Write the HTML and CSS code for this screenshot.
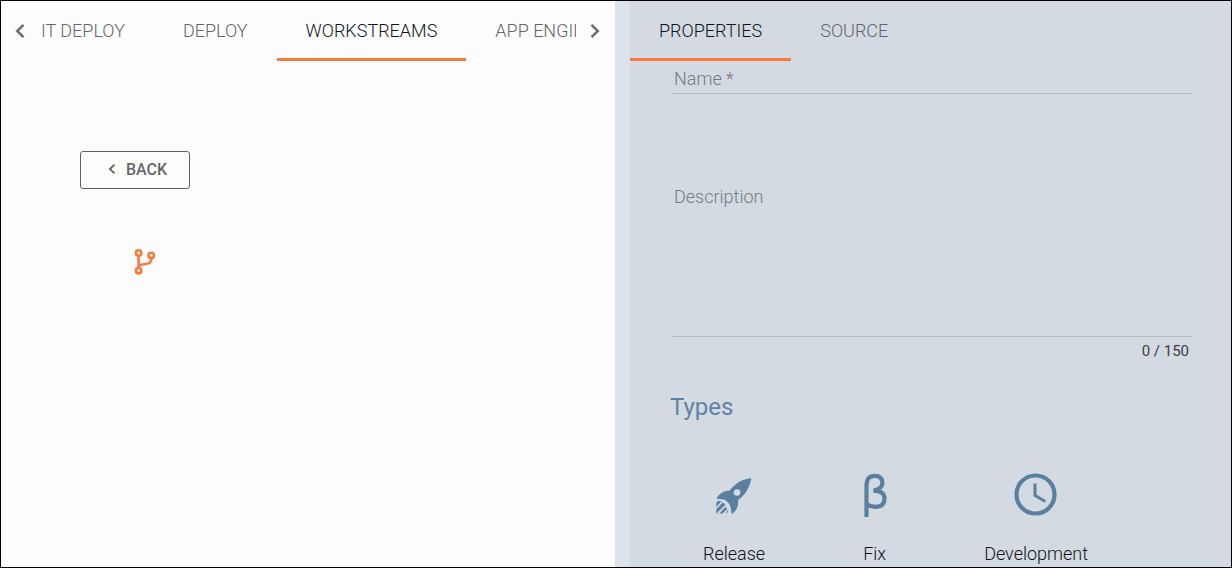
FILE: index.html
```html
<!DOCTYPE html>
<html lang="en">
<head>
<meta charset="utf-8">
<title>Workstreams</title>
<link rel="stylesheet" href="styles.css">
</head>
<body>
<div class="app">
  <main class="canvas">
    <nav class="tabbar" aria-label="Sections">
      <button class="scroll" type="button" aria-label="Scroll left"><svg width="10" height="14" viewBox="0 0 10 14"><path d="M8.500 .8 2.200 7l6.300 6.200"/></svg></button>
      <div class="strip">
        <button class="tab tab-cut" type="button">IT DEPLOY</button>
        <button class="tab" type="button">DEPLOY</button>
        <button class="tab tab-on" type="button">WORKSTREAMS</button>
        <button class="tab" type="button">APP ENGINE</button>
      </div>
      <button class="scroll" type="button" aria-label="Scroll right"><svg width="10" height="14" viewBox="0 0 10 14"><path d="M1.500 .8 7.800 7l-6.300 6.200"/></svg></button>
    </nav>
    <div class="stage">
      <button class="back" type="button"><svg width="8" height="10" viewBox="0 0 8 10"><path d="M6.500 .7 1.900 5l4.600 4.300"/></svg>BACK</button>
      <svg class="branch" width="22" height="26" viewBox="0 0 22 26" role="img" aria-label="Workstream">
        <circle cx="4.600" cy="4" r="2.700"/><circle cx="4.600" cy="21.700" r="2.700"/><circle cx="17.200" cy="6.400" r="2.700"/>
        <path d="M4.600 6.700V19M4.600 18c.3-4.600 10.500-.7 12.200-5.600.4-1 .4-2 .4-3.300"/>
      </svg>
    </div>
  </main>
  <div class="divider"></div>
  <aside class="panel">
    <nav class="tabbar" aria-label="Details">
      <button class="tab tab-on" type="button">PROPERTIES</button>
      <button class="tab" type="button">SOURCE</button>
    </nav>
    <form class="form">
      <div class="field">
        <label class="label" for="name">Name *</label>
        <input class="control control-line" id="name" type="text" required>
      </div>
      <div class="field field-area">
        <label class="label" for="desc">Description</label>
        <textarea class="control control-area" id="desc" maxlength="150"></textarea>
      </div>
      <div class="counter">0 / 150</div>
      <h2 class="heading">Types</h2>
      <div class="types">
        <button class="type" type="button">
          <svg class="type-icon" viewBox="1 0 44 44">
            <path d="M40.300 5.200C30 6.300 24 10.800 18.500 17.700c-5.500-.2-9.500 2.300-13.200 7.800l6.900 1.100c2.100.3 3.200 1.200 4.500 2.600 1.900 1.600 2.900 3.600 3 5.900l1 5.900c5.200-3.600 7-8.600 6.400-14C34.200 21.800 38.600 15 40.300 5.200Z"/>
            <circle class="port" cx="26" cy="19.500" r="3.300"/>
            <path d="M5.200 31.600c.1-1.700.8-3 1.900-3.900 1.200-.2 2.300.1 3.300.7L5.200 33.900ZM11.600 29.400l3 2-9.300 9.300v-4.400ZM10.300 38.200l4-4.200 2 1.700-4.700 4.900H8.200ZM17.200 36.500c.3 1.900-.9 3.600-2.900 4.200Z"/>
          </svg>
          <span>Release</span>
        </button>
        <button class="type" type="button">
          <svg class="type-icon" viewBox="0 0 44 44">
            <path class="stroke" d="M13.500 44V13C13.500 6 16.300 2.800 21.700 2.800c4.900 0 7.700 2.500 7.700 6.800 0 5-3.300 7.400-9 8.100 7.300.2 11.100 2.700 11.100 7.800 0 5.400-3.300 8.300-9.100 8.300-3.700 0-6.700-.9-8.900-2.600"/>
          </svg>
          <span>Fix</span>
        </button>
        <button class="type" type="button">
          <svg class="type-icon" viewBox="0.500 0 44 44">
            <circle class="stroke" cx="22" cy="21.500" r="19"/>
            <path class="stroke hands" d="M21.500 10.500v12l10.300 6"/>
          </svg>
          <span>Development</span>
        </button>
      </div>
    </form>
  </aside>
</div>
</body>
</html>
```
FILE: styles.css
```css
* { box-sizing: border-box; }
body {
  margin: 0;
  font-family: Roboto, sans-serif;
  font-size: 18px;
  font-weight: 300;
  color: #101418;
}
button {
  padding: 0;
  border: 0;
  background: none;
  font: inherit;
  color: inherit;
  cursor: pointer;
}
.app {
  display: flex;
  min-height: 100vh;
  border: 1px solid #000;
  background: #fdfdfd;
}
.canvas { flex: 614 1 0; min-width: 0; }
.divider { width: 15px; background: #dbe2ec; }
.panel { flex: 601 1 0; min-width: 0; background: #d3dae2; }

.tabbar { display: flex; height: 60px; }
.strip { display: flex; flex: 1; overflow: hidden; }
.scroll {
  display: flex;
  flex: none;
  align-items: center;
  justify-content: center;
  width: 39px;
  padding-right: 2px;
}
.scroll path { fill: none; stroke: #707070; stroke-width: 2.500; }
.tab {
  flex: none;
  padding: 1px 29px 0;
  border-bottom: 3px solid transparent;
  color: #62666a;
}
.tab-cut { padding-left: 1px; }
.tab-on { border-color: #f97a3c; color: #0c1420; }

.stage {
  display: flex;
  flex-direction: column;
  align-items: flex-start;
  gap: 60px;
  padding: 90px 79px;
}
.back {
  display: flex;
  align-items: center;
  justify-content: center;
  gap: 10px;
  width: 110px;
  height: 38px;
  padding: 0 0 2px 5px;
  border: 1px solid #606060;
  border-radius: 3px;
  font-size: 16px;
  font-weight: 500;
  color: #666;
}
.back path { fill: none; stroke: #606060; stroke-width: 1.800; }
.branch {
  margin-left: 54px;
  fill: none;
  stroke: #f97a3c;
  stroke-width: 2.600;
}

.form { padding: 0 39px 0 42px; }
.field { display: grid; }
.label, .control { grid-area: 1 / 1; }
.label {
  z-index: 1;
  align-self: start;
  justify-self: start;
  padding: 7px 2px 0;
  line-height: 22px;
  color: #757a80;
  pointer-events: none;
}
.control {
  display: block;
  width: 100%;
  margin: 0;
  padding: 7px 2px 0;
  border: 0;
  border-bottom: 1px solid #b5bcc4;
  border-radius: 0;
  background: transparent;
  font: inherit;
  color: inherit;
  outline: 0;
  resize: none;
}
.control-line { height: 33px; }
.field-area { margin-top: 85px; }
.control-area { height: 158px; }
.counter {
  padding: 4px 3px 0;
  font-size: 15px;
  font-weight: 400;
  line-height: 20px;
  text-align: right;
  color: #3a4046;
}
.heading {
  margin: 32px 0 0 -2px;
  font-size: 24px;
  font-weight: 400;
  line-height: 28px;
  color: #5f84a3;
}
.types {
  display: flex;
  gap: 98px;
  padding: 52px 0 2px 31px;
}
.type {
  display: flex;
  flex-direction: column;
  align-items: center;
  gap: 26px;
  line-height: 22px;
}
.type-icon {
  width: 44px;
  height: 44px;
  margin: 0 -11px;
  fill: #5a80a0;
}
.port { fill: #d3dae2; }
.stroke { fill: none; stroke: #5a80a0; stroke-width: 4.200; }
.hands { stroke-width: 3; }
```
